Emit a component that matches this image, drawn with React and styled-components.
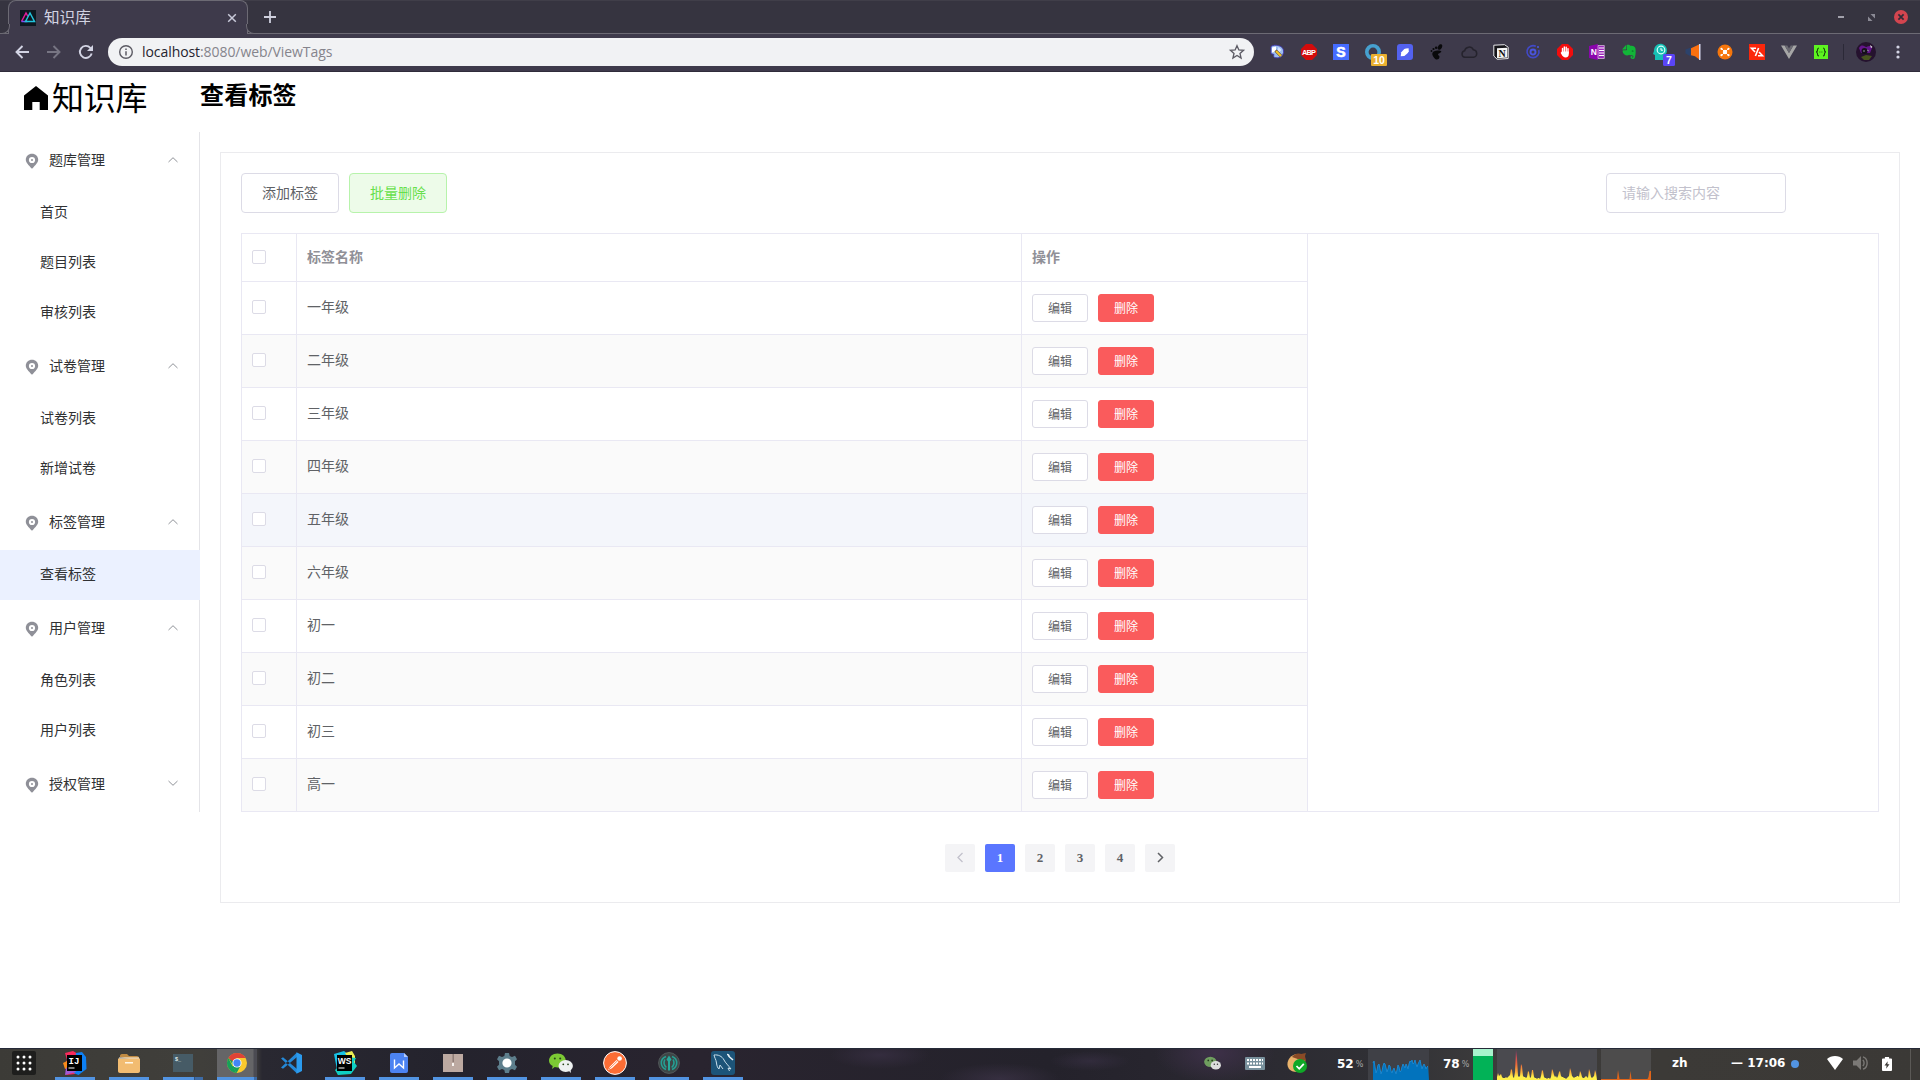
import React from "react";
import styled, { createGlobalStyle } from "styled-components";

const cjk = '"Noto Sans CJK SC"';

const GlobalStyle = createGlobalStyle`
  * { box-sizing: border-box; }
  html, body { margin: 0; padding: 0; background: #fff; }
  body { width: 1920px; height: 1080px; overflow: hidden; font-family: "Liberation Serif", ${cjk}, serif; }
  svg { display: block; flex: none; overflow: visible; }
`;

const Screen = styled.div`
  width: 1920px;
  height: 1080px;
  display: flex;
  flex-direction: column;
  overflow: hidden;
`;

/* ---------- browser chrome ---------- */
const TabStrip = styled.div`
  height: 34px;
  flex: none;
  background: #363440;
  border-top: 1px solid #403e49;
  border-bottom: 1px solid #6c6a74;
  display: flex;
  align-items: stretch;
  padding-left: 8px;
`;

const Tab = styled.div`
  position: relative;
  width: 240px;
  margin: -1px 0 -1px;
  background: #3e3a4b;
  border: 1px solid #6c6a74;
  border-bottom: 0;
  border-radius: 8px 8px 0 0;
  display: flex;
  align-items: center;
  padding: 0 10px 0 11px;
  font-family: "Noto Sans", ${cjk}, sans-serif;
  font-size: 15.6px;
  color: #d2d3e2;
  &::before, &::after {
    content: "";
    position: absolute;
    bottom: 0;
    width: 9px;
    height: 9px;
    border-bottom: 1px solid #6c6a74;
    background: #363440;
  }
  &::before { left: -9px; border-right: 1px solid #6c6a74; border-bottom-right-radius: 8px; }
  &::after { right: -9px; border-left: 1px solid #6c6a74; border-bottom-left-radius: 8px; }
`;

const TabTitle = styled.span`
  margin-left: 8px;
  flex: 1;
  line-height: 20px;
  padding-bottom: 2px;
`;

const NewTab = styled.div`
  width: 44px;
  display: flex;
  align-items: center;
  justify-content: center;
`;

const WindowControls = styled.div`
  margin-left: auto;
  display: flex;
  align-items: center;
  padding-right: 4px;
`;

const Slot = styled.div`
  width: ${(p) => p.$w || 32}px;
  display: flex;
  align-items: center;
  justify-content: center;
  flex: none;
`;

const Toolbar = styled.div`
  height: 38px;
  flex: none;
  background: #3e3a4b;
  border-bottom: 1px solid #2f2c3a;
  display: flex;
  align-items: center;
  padding: 0 6px 1px;
`;

const AddressBar = styled.div`
  width: 1147px;
  height: 28px;
  margin-left: 6px;
  margin-right: 6px;
  border-radius: 14px;
  background: #f1f2f4;
  display: flex;
  align-items: center;
  padding: 0 9px 0 11px;
`;

const Url = styled.div`
  flex: 1;
  margin-left: 9px;
  font-family: "Open Sans", "Noto Sans", sans-serif;
  font-size: 14px;
  line-height: 20px;
  letter-spacing: -0.07px;
  padding-bottom: 1px;
  color: #85848c;
  span { color: #25232e; }
`;

const Extensions = styled.div`
  display: flex;
  padding-left: 1px;
`;

const Divider = styled.div`
  width: 1px;
  height: 16px;
  background: #2b2937;
  margin: 0 6px;
`;

/* ---------- page ---------- */
const Page = styled.div`
  height: 976px;
  flex: none;
  background: #fff;
`;

const Header = styled.header`
  height: 60px;
  display: flex;
`;

const Logo = styled.div`
  width: 200px;
  padding-left: 23px;
  display: flex;
  align-items: center;
  gap: 3px;
  height: 52px;
  font-family: ${cjk}, sans-serif;
  font-size: 32px;
  font-weight: 400;
  color: #000;
  span { line-height: 52px; letter-spacing: -0.3px; padding-bottom: 4px; }
`;

const PageTitle = styled.h2`
  margin: 0;
  font-family: ${cjk}, sans-serif;
  font-size: 24px;
  font-weight: 700;
  letter-spacing: 0.2px;
  line-height: 44px;
  color: #000;
`;

const Body = styled.div`
  display: flex;
  align-items: flex-start;
`;

const Sidebar = styled.nav`
  width: 200px;
  height: 680px;
  border-right: 1px solid #e4e4e8;
  font-family: ${cjk}, sans-serif;
  font-size: 14px;
  color: #303133;
`;

const Group = styled.div`
  height: 56px;
  display: flex;
  align-items: center;
  padding: 0 20px 0 25px;
  span { flex: 1; margin-left: 10px; line-height: 20px; padding-bottom: 2px; }
  svg:first-child { margin-top: 2px; }
`;

const Item = styled.div`
  width: 200px;
  height: 50px;
  line-height: 47px;
  padding-left: 40px;
  background: ${(p) => (p.$active ? "#ebf1ff" : "transparent")};
`;

const Card = styled.main`
  width: 1680px;
  height: 751px;
  margin: 20px 0 0 20px;
  padding: 20px;
  border: 1px solid #ebebee;
  color: #606266;
`;

const Actions = styled.div`
  display: flex;
  gap: 10px;
  margin-bottom: 20px;
`;

const Button = styled.button`
  width: 98px;
  height: 40px;
  padding: 0 0 3px;
  border-radius: 4px;
  border: 1px solid ${(p) => (p.$success ? "#b7f3ab" : "#dcdbe6")};
  background: ${(p) => (p.$success ? "#edfbe9" : "#fff")};
  color: ${(p) => (p.$success ? "#67e04c" : "#606266")};
  font: 14px/20px ${cjk}, sans-serif;
`;

const Search = styled.input`
  width: 180px;
  height: 40px;
  margin-left: auto;
  margin-right: 93px;
  padding: 0 15px 3px;
  border-radius: 4px;
  border: 1px solid #dcdbe6;
  background: #fff;
  font: 14px/20px ${cjk}, sans-serif;
  &::placeholder { color: #c2c1cc; opacity: 1; }
`;

const line = "#e9e8f3";

const Table = styled.div`
  height: 579px;
  border: 1px solid ${line};
`;

const Row = styled.div`
  width: 1066px;
  height: ${(p) => (p.$head ? 48 : 53)}px;
  display: grid;
  grid-template-columns: 55px 725px 286px;
  border-bottom: 1px solid ${line};
  background: ${(p) => (p.$hover ? "#f4f6fb" : p.$striped ? "#fafafa" : "#fff")};
  font-family: ${cjk}, sans-serif;
  font-size: 14px;
  font-weight: ${(p) => (p.$head ? 700 : 400)};
  color: ${(p) => (p.$head ? "#909097" : "#606266")};
  &:last-child { border-bottom: 0; height: 52px; }
`;

const Cell = styled.div`
  border-right: 1px solid ${line};
  padding: 0 10px ${(p) => p.$lift || 0}px;
  display: flex;
  align-items: center;
  gap: 10px;
`;

const Checkbox = styled.span`
  width: 14px;
  height: 14px;
  border: 1px solid #dcdbe6;
  border-radius: 2px;
  background: #fff;
`;

const MiniButton = styled.button`
  width: 56px;
  height: 28px;
  padding: 0 0 1px;
  border-radius: 3px;
  border: 1px solid ${(p) => (p.$danger ? "#fa5b5c" : "#dcdbe6")};
  background: ${(p) => (p.$danger ? "#fa5b5c" : "#fff")};
  color: ${(p) => (p.$danger ? "#fff" : "#606266")};
  font: 12px/16px ${cjk}, sans-serif;
`;

const Pagination = styled.div`
  display: flex;
  justify-content: center;
  gap: 10px;
  margin-top: 32px;
`;

const PageNumber = styled.button`
  width: 30px;
  height: 28px;
  padding: 0;
  border: 0;
  border-radius: 2px;
  display: flex;
  align-items: center;
  justify-content: center;
  background: ${(p) => (p.$active ? "#5a76ff" : "#f4f4f6")};
  color: ${(p) => (p.$active ? "#fff" : "#606266")};
  font: 700 13px/28px "Liberation Serif", serif;
`;

/* ---------- desktop panel ---------- */
const Taskbar = styled.footer`
  height: 32px;
  flex: none;
  display: flex;
  border-top: 1px solid #252a38;
  background:
    radial-gradient(ellipse 60px 30px at 1215px 4px, #3d3048, transparent),
    radial-gradient(ellipse 60px 16px at 1000px 30px, #40364ca0, transparent),
    radial-gradient(ellipse 50px 14px at 880px 6px, #3a3146b0, transparent),
    radial-gradient(ellipse 40px 10px at 1090px 12px, #3b324890, transparent),
    linear-gradient(90deg, #3c3b37 0, #403f3b 200px, #3d3c3c 256px, #292831 262px, #24232d 450px, #29242f 700px, #24222b 1050px, #28262f 1180px, #303035 1380px, #3d3c3c 1500px, #3c3a37 1660px, #3b3936 1920px);
  color: #fff;
  font-family: "DejaVu Sans", sans-serif;
  font-weight: 700;
  font-size: 12px;
`;

const AppSlot = styled.div`
  width: ${(p) => p.$w || 54}px;
  flex: none;
  display: flex;
  flex-direction: column;
  align-items: center;
`;

const AppFace = styled.div`
  width: 40px;
  height: 28px;
  padding-bottom: 1px;
  display: flex;
  align-items: center;
  justify-content: center;
  background: ${(p) => (p.$active ? "linear-gradient(90deg, #656567 0 36px, #4b4b52 37px)" : "none")};
`;

const Underline = styled.div`
  width: 40px;
  height: 3px;
  background: ${(p) =>
    p.$kind === "none" ? "none" :
    p.$kind === "stacked" ? "linear-gradient(90deg, #5294e2 0 31px, #35527a 31px 32px, #3d6ba5 32px)" :
    p.$kind === "active" ? "linear-gradient(90deg, #5294e2 0 37px, #3d6ba5 37px)" : "#5294e2"};
`;

const Tray = styled.div`
  margin-left: auto;
  width: 729px;
  display: flex;
  align-items: center;
`;

const Percent = styled.div`
  width: ${(p) => p.$w}px;
  display: flex;
  align-items: center;
  line-height: 29px;
  padding-bottom: 1px;
  gap: 2px;
  small { font-size: 8px; font-weight: 400; color: #a8a8a8; }
`;

const Memory = styled.div`
  width: 20px;
  height: 31px;
  background: linear-gradient(#a9f4cd 0 7px, #02b257 7px);
  margin-right: 4px;
`;

const Graph = styled.div`
  width: ${(p) => p.$w}px;
  height: 31px;
  margin-right: ${(p) => p.$gap || 0}px;
  background: ${(p) => p.$tone || "#4a4a4f"};
`;

const Label = styled.div`
  width: ${(p) => p.$w}px;
  line-height: 29px;
  padding-bottom: 2px;
  white-space: nowrap;
`;

const Dot = styled.div`
  width: 8px;
  height: 8px;
  border-radius: 50%;
  background: #5294e2;
  margin: 0 28px 2px 0;
`;

const Battery = styled.div`
  margin-left: 3px;
  margin-bottom: 2px;
`;

const PanelEdge = styled.div`
  width: 1px;
  height: 31px;
  background: #5b5956;
  margin-left: 18px;
`;

/* ---------- icons ---------- */
const Svg = ({ s = 16, w, h, vb, children, ...rest }) => (
  <svg width={w || s} height={h || s} viewBox={vb || `0 0 ${w || s} ${h || s}`} fill="none" {...rest}>{children}</svg>
);
const T = ({ children, ...p }) => (
  <text textAnchor="middle" fontFamily="Liberation Sans, sans-serif" fontWeight="700" {...p}>{children}</text>
);

const extensions = [
  <Svg s={16}><path d="M2 2.500C4 1 7 1 8.500 1.500c4 .5 6.500 3 6 7-1 5-5 6-9 5C4 12 5 11 5 10.500L2 9.500z" fill="#9dbdf0" stroke="#4038b0" strokeWidth=".9" /><path d="M3 3.500l4-1v5l-4 1z" fill="#fff" /><path d="M9.500 3l3 3-2 2-2-1z" fill="#d5e3ff" /><path d="M6.500 6.500l5.500 5.500" stroke="#4b3a2a" strokeWidth="3" /><path d="M7 7l5 5" stroke="#f3c32c" strokeWidth="2.200" /></Svg>,
  <Svg s={16}><path d="M5 0h6l5 5v6l-5 5H5l-5-5V5z" fill="#d30b0b" /><T x="8" y="10.800" fontSize="7.400" fill="#fff" textLength="14">ABP</T></Svg>,
  <Svg s={16}><path fill="#456cff" d="M0 0h16v16H0z" /><T x="8" y="13" fontSize="14" fill="#fff" stroke="#fff" strokeWidth=".6">S</T></Svg>,
  <Svg w={24} h={24}><circle cx="12" cy="12" r="6.200" stroke="#46a0cf" strokeWidth="3.600" /><rect x="10" y="14" width="16" height="12" rx="1" fill="#eab02f" /><T x="18" y="23.800" fontSize="10.500" fill="#fff">10</T></Svg>,
  <Svg s={16}><path d="M3 0h10a3 3 0 013 3v10a3 3 0 01-3 3H0V3a3 3 0 013-3z" fill="#5362f0" /><path d="M3.700 12.200l.6-4 3-3.200L9 4.600l2.600-.3.200 3-1 1.600-3.400 3z" fill="#fff" /></Svg>,
  <Svg s={16}><path d="M3.300 9.500c.5-3 5.500-3.500 8.500-2.500 2.200 1.500-2.800 2-2.800 3.500 0 1.200 1.700.6 1.500 2.500-.5 3.200-3.700 3-5 1.300-1-1.200-2.500-3-2.200-4.800z" fill="#09090b" /><ellipse cx="11" cy="3" rx="2" ry="2.900" transform="rotate(25 11 3)" fill="#09090b" /><circle cx="7.200" cy="3.800" r="1.300" fill="#09090b" /><circle cx="4.500" cy="5" r="1.100" fill="#09090b" /><circle cx="2.500" cy="7" r=".9" fill="#09090b" /></Svg>,
  <Svg s={16}><path d="M4 13.300a3.300 3.300 0 01-.4-6.500A4.600 4.600 0 0112.300 5.800a3.800 3.800 0 01.4 7.500z" stroke="#25232d" strokeWidth="1.500" /></Svg>,
  <Svg s={16}><path d="M.8 1.200L11.500.7l3.700 2.500v11.300l-11 .8L.8 12z" fill="#16151a" stroke="#e7e7ea" /><path d="M4 4.300l10.300-.6v9.900L4 14.200z" fill="#f6f6f6" /><T x="9.200" y="12.600" fontSize="10" fill="#111" fontFamily="Liberation Serif">N</T></Svg>,
  <Svg s={16}><path d="M10.800 2.300A6 6 0 1013.800 6" stroke="#4149c8" strokeWidth="1.600" /><circle cx="8" cy="8" r="2.500" stroke="#4a55de" strokeWidth="1.900" /><circle cx="13" cy="3" r="1.100" fill="#4a55de" /></Svg>,
  <Svg s={16}><path d="M5 0h6l5 5v6l-5 5H5l-5-5V5z" fill="#f20d0d" /><path d="M5.500 9V4.400M7.300 8V2.900M9.200 8V3.100M11 9V4.600" stroke="#fff" strokeWidth="1.400" strokeLinecap="round" /><path d="M4.800 7.500h7V10c0 2-1 3.500-3.200 3.500-2 0-3.100-1.400-4-3l-1-1.800 1-.6z" fill="#fff" /></Svg>,
  <Svg s={16}><path d="M0 2l9-2v16l-9-2z" fill="#8a06ac" /><path d="M9 1.500h6.300v13H9z" fill="#9b29b9" stroke="#e3c5ea" strokeWidth=".7" /><path d="M10 4h5M10 6.500h5M10 9h5M10 11.500h5" stroke="#fff" /><T x="4.700" y="11" fontSize="8.500" fill="#fff">N</T></Svg>,
  <Svg s={16}><path d="M5 1l-4 4.500h3.400c.7 0 1-.3 1-1V1zM6 .8c1.800-.4 3 .3 3.300 1 4 .2 5 1 5.300 3.700.3 4-.2 6-.8 8.200-.5 1.800-4.200 1.500-4.300-.4-.1-1.700 2.200-1.800 2.300-.6-1.200-.1-1 .8 0 .8.800 0 .9-1.500-.3-2-1.500-.5-2.500.3-3.200-.7C6 12.500 2 11 1.500 7c0-.4.3-.8.800-.8H5c.7 0 1-.4 1-1z" fill="#12b538" /><ellipse cx="11.600" cy="7" rx="1" ry=".6" fill="#0b5a26" /></Svg>,
  <Svg w={24} h={24}><path d="M6 20v-5l-2-1 1-3c0-5 4-8 8-7s6 5 4.500 9L15 16v4z" fill="#16bfb4" /><circle cx="12" cy="10" r="3.800" stroke="#d8fffb" strokeWidth="1.200" /><path d="M12 8v2.200h2" stroke="#fff" /><rect x="14" y="14" width="12" height="12" rx="1.500" fill="#5a45f6" /><T x="20" y="23.800" fontSize="10.500" fill="#fff">7</T></Svg>,
  <Svg s={16}><path d="M.5 5.500l5.500-2v9l-5.500-3z" fill="#2c426b" /><path d="M6 4.300L14 .5v14.700l-4-3-4-1z" fill="#fb7010" /><path d="M14 0h1.500v16H14z" fill="#d7d8ef" /></Svg>,
  <Svg s={16}><circle cx="8" cy="8" r="7.500" fill="#f6760c" /><path d="M4.500 4.500l7 7M11.500 4.500l-7 7" stroke="#fff" strokeWidth=".9" /><circle cx="8" cy="8" r="2.200" fill="#fff" /><g fill="#fff"><circle cx="4.500" cy="4.800" r="1.100" /><circle cx="11.500" cy="4.800" r="1.100" /><circle cx="4.500" cy="11.200" r="1.100" /><circle cx="11.500" cy="11.200" r="1.100" /></g></Svg>,
  <Svg s={16}><path fill="#fb270b" d="M0 0h16v16H0z" /><path d="M7 4.300H2.500L6 8M9 11.700h4.500L10 8M9.600 4L6.400 12" stroke="#fff" strokeWidth="1.600" /></Svg>,
  <Svg s={16}><path d="M0 1.500h3.600L8 9l4.400-7.500H16L8 15z" fill="#a6a6a6" /><path d="M3.600 1.500h2.700L8 4.400l1.700-2.900h2.700L8 9z" fill="#6b6a72" /></Svg>,
  <Svg s={16}><path fill="#5df420" d="M1 1h14v14H1z" /><path d="M6 4c-1.500 0-1.500.5-1.500 2S4 8 3 8c1 0 1.500.5 1.500 2s0 2 1.500 2M10 4c1.500 0 1.500.5 1.500 2s.5 2 1.500 2c-1 0-1.500.5-1.500 2s0 2-1.500 2M6.500 8h.8M8.500 8h.8" stroke="#153d0c" strokeWidth="1.100" /></Svg>,
];

const Pin = () => (
  <Svg w={14} h={16}><path d="M7 .8c3.500 0 6.200 2.600 6.200 6 0 2.700-2.500 5.200-6.200 9-3.700-3.800-6.200-6.300-6.200-9 0-3.400 2.700-6 6.200-6z" fill="#8f9098" /><circle cx="7" cy="7" r="3.100" fill="#fff" /><circle cx="7" cy="7" r="1" fill="#8f9098" /></Svg>
);
const Arrow = ({ up }) => (
  <Svg w={12} h={8}><path d={up ? "M1.500 6L6 1.700 10.500 6" : "M1.500 1L6 5.300 10.500 1"} stroke="#909399" strokeWidth="1" /></Svg>
);
const Hex = ({ children }) => <Svg s={24}>{children}</Svg>;

const apps = [
  { u: "on", i: <Hex><path d="M2 2l8-2 5 3-3 20-9 1 3-7-5-3 3-5z" fill="#f9295c" /><path d="M0 12l6-3v8l-4 1z" fill="#f98b1b" /><path d="M13 2l6-1 4 5 .5 12-8 6-5-2z" fill="#0d80f4" /><path d="M3 17l6-3 4 7-11 3z" fill="#a05bd6" /><path fill="#000" d="M4 4h15v16H4z" /><T x="11" y="12.600" fontSize="9" fill="#fff" fontFamily="Liberation Mono">IJ</T><path fill="#fff" d="M5.500 16.500h6v1h-6z" /></Hex> },
  { u: "on", i: <Svg w={22} h={18}><path d="M2 3V2c0-1 .5-2 2-2h5l2 2h8c1 0 2 .8 2 2v3z" fill="#c08b43" /><path d="M0 4.500h22V17c0 1.200-.8 2-2 2H2c-1.200 0-2-.8-2-2z" fill="#f2bc71" /><path d="M1 3.500h20v1H1zM7 8h8v1.400H7z" fill="#fff7e8" /></Svg> },
  { u: "stacked", i: <Svg w={20} h={20}><path fill="#465b66" d="M0 1h20v18H0z" /><T x="5" y="8" fontSize="5.500" fill="#dfe7ea">$_</T></Svg> },
  { u: "active", i: <Svg s={20} vb="0 0 48 48"><circle cx="24" cy="24" r="24" fill="#fbc92d" /><path d="M3.200 12L15 35l8 13A24 24 0 013.200 12z" fill="#16a05a" /><path d="M3.200 12l11 17 9.800-5z" fill="#16a05a" /><path d="M23 48l10-18-10 4-8-4-3 2z" fill="#16a05a" /><path d="M3.200 12A24 24 0 0144.800 12H24L14 20z" fill="#e04336" /><circle cx="24" cy="24" r="11" fill="#fff" /><circle cx="24" cy="24" r="8.800" fill="#4285f4" /></Svg> },
  { u: "none", i: <Svg s={22}><path d="M1 6.500l2-1.200L17 17v4.500zM1 15.500l2 1.200L17 5V.5z" fill="#2489d8" /><path d="M16.500.3L22 3v16l-5.500 2.700z" fill="#2b9bee" /></Svg> },
  { u: "on", i: <Hex><path d="M1 3l10-3 5 4-2 16-9 4z" fill="#17c3e6" /><path d="M12 2l7-2 3 5v9l-4-2z" fill="#ecef53" /><path d="M15 6l8 1-2 4 3 4-6 8-13 1-3-5z" fill="#0fcfc4" /><path fill="#000" d="M4 4h15v16H4z" /><T x="11.500" y="12.500" fontSize="8.500" fill="#fff">WS</T><path fill="#fff" d="M5.500 16.500h6v1h-6z" /></Hex> },
  { u: "on", i: <Svg w={18} h={20}><path d="M2 0h12l4 4v14a2 2 0 01-2 2H2a2 2 0 01-2-2V2a2 2 0 012-2z" fill="#4c83f2" /><path d="M14 0l4 4h-4z" fill="#b5ccfb" /><path d="M4.500 6.500V15L9 11l4.500 4V7.500" stroke="#fff" strokeWidth="1.400" /></Svg> },
  { u: "on", i: <Svg w={20} h={20}><path fill="#bca9a1" d="M0 1h20v18H0z" /><path d="M9.500 1h1.400v8H9.500z" fill="#8c7a74" /><path d="M9 10h2v3H9z" fill="#f7f2ef" /></Svg> },
  { u: "on", i: <Svg s={22}><path d="M9 1h4l.7 3 2.300 1 3-1.300 2 3.500-2 2v3.600l2 2-2 3.500-3-1.300-2.300 1L13 21H9l-.7-3L6 17l-3 1.300-2-3.500 2-2V9.200l-2-2L3 3.700 6 5l2.300-1z" fill="#5d7e8c" /><circle cx="11" cy="11" r="4.600" fill="#fff" /></Svg> },
  { u: "on", i: <Svg w={24} h={20}><path d="M8.500.5c5 0 8.300 3.200 8.300 7.200S13.500 14.500 8.500 14.500c-1 0-2-.1-2.800-.4L3 16l.7-3C1.300 11.700 0 9.900 0 7.700 0 3.700 3.500.5 8.500.5z" fill="#7cc934" /><ellipse cx="16.700" cy="12.900" rx="7.200" ry="6" fill="#eef1f1" /><path d="M19 17l3 3-.5-3.500z" fill="#eef1f1" /><g fill="#28451a"><circle cx="5.800" cy="5.500" r="1" /><circle cx="11.200" cy="5.500" r="1" /><circle cx="14.300" cy="11.300" r=".9" /><circle cx="19" cy="11.300" r=".9" /></g></Svg> },
  { u: "on", i: <Hex><circle cx="12" cy="12" r="11.400" fill="#fc6d35" stroke="#fff" /><path d="M5 19l2-3.500L13.500 9l2 2L9 17.300z" fill="#fff" /><path d="M6 18L14.500 9.800" stroke="#fc6d35" strokeWidth=".8" /><circle cx="16.600" cy="7.500" r="2.300" fill="#fff" /></Hex> },
  { u: "on", i: <Svg s={22}><circle cx="11" cy="11" r="10.400" fill="#3d4647" stroke="#52595b" /><path d="M8 4.500C1.500 7 2 15 8 17.500M14 4.500c6.500 2.500 6 10.500 0 13M6.800 7.500c-1.300 3-.8 6 1.500 8M15.200 7.500c1.300 3 .8 6-1.500 8" stroke="#249f93" strokeWidth="1.600" /><path d="M11 3.500l2.500 4-1.500 2v9h-2v-9l-1.500-2z" fill="#27a99c" /></Svg> },
  { u: "on", i: <Hex><rect width="24" height="24" rx="3" fill="#1c5479" /><path d="M3 4c4-.5 8 1 10 5 1.500 3 4 5 7 9l-3-1 1.500 3M3 4c.5 3 2 4 2.500 8 .3 3 1.200 5 2.500 6l1-4 3 4" stroke="#c9dfeb" strokeWidth="1" /><path d="M16 3.500c1.500 0 2 .6 2 2l4 3.500" stroke="#e9f2f7" strokeWidth="1.600" /></Hex> },
];

const cpu = [16, 18, 12, 6, 9, 14, 15, 10, 5, 8, 13, 16, 15, 11, 7, 10, 14, 13, 8, 6, 9, 11, 8, 5, 9, 14, 12, 7, 8, 12, 15, 13, 11, 15, 13, 10, 15, 18, 17, 19, 15, 16, 19, 15, 12, 15, 17, 19, 14, 10, 13, 15, 13, 10, 12, 13];
const cpuPoints = cpu.map((v, i) => `${i + 5},${30 - v}`).join(" ");
const disk = [3, 7, 4, 5, 6, 3, 2, 2, 2, 3, 2, 3, 4, 5, 11, 10, 3, 2, 8, 30, 22, 4, 3, 4, 16, 14, 4, 3, 3, 2, 3, 9, 8, 2, 3, 10, 10, 3, 2, 2, 1, 2, 2, 1, 4, 10, 9, 3, 2, 2, 1, 2, 2, 1, 3, 11, 9, 5, 3, 4, 2, 4, 8, 9, 4, 3, 3, 2, 2, 1, 2, 3, 4, 12, 9, 4, 3, 2, 3, 3, 4, 4, 3, 9, 7, 3, 2, 2, 3, 4, 3, 2, 11, 8, 3, 2, 3, 4, 10, 7];

const menu = [
  { title: "题库管理", items: ["首页", "题目列表", "审核列表"] },
  { title: "试卷管理", items: ["试卷列表", "新增试卷"] },
  { title: "标签管理", items: ["查看标签"] },
  { title: "用户管理", items: ["角色列表", "用户列表"] },
  { title: "授权管理", items: [] },
];
const tags = ["一年级", "二年级", "三年级", "四年级", "五年级", "六年级", "初一", "初二", "初三", "高一"];

export default function App() {
  return (
    <Screen>
      <GlobalStyle />
      <TabStrip>
        <Tab>
          <Svg s={16}><path fill="#0d1820" d="M0 0h16v16H0z" /><path d="M1.500 11.500L6 3l2 3.500" stroke="#e31b9b" strokeWidth="1.500" /><path d="M1.500 11.500h6" stroke="#7a4ff0" strokeWidth="1.500" /><path d="M5.500 11.500L10 3l4.500 8.500z" stroke="#22c4dd" strokeWidth="1.500" /></Svg>
          <TabTitle>知识库</TabTitle>
          <Svg s={10}><path d="M1.200 1.200l7.600 7.600M8.800 1.200L1.200 8.800" stroke="#c9cada" strokeWidth="1.500" /></Svg>
        </Tab>
        <NewTab><Svg s={12}><path d="M6 0v12M0 6h12" stroke="#cfd0de" strokeWidth="1.800" /></Svg></NewTab>
        <WindowControls>
          <Slot $w={30}><Svg w={6} h={2}><path fill="#a2a1ab" d="M0 0h6v2H0z" /></Svg></Slot>
          <Slot $w={30}><Svg s={7}><path d="M2.500 0H7v4.500zM0 2.500V7h4.500z" fill="#8b8a95" /></Svg></Slot>
          <Slot $w={30}><Svg s={14}><circle cx="7" cy="7" r="7" fill="#d3454f" /><path d="M4.400 4.400l5.200 5.200M9.600 4.400L4.400 9.600" stroke="#302c38" strokeWidth="1.700" /></Svg></Slot>
        </WindowControls>
      </TabStrip>
      <Toolbar>
        <Slot><Svg s={14}><path d="M14 7H1.800M7.500 1L1.500 7l6 6" stroke="#d3d4e4" strokeWidth="1.900" /></Svg></Slot>
        <Slot><Svg s={14}><path d="M0 7h12.200M6.500 1l6 6-6 6" stroke="#777583" strokeWidth="1.900" /></Svg></Slot>
        <Slot><Svg s={14}><path d="M12.700 8.500A6 6 0 1111.300 2.800L12.500 4" stroke="#d3d4e4" strokeWidth="1.900" /><path d="M14 0v6H8z" fill="#d3d4e4" /></Svg></Slot>
        <AddressBar>
          <Svg s={14}><circle cx="7" cy="7" r="6.300" stroke="#5c5b64" strokeWidth="1.400" /><path d="M7 6.200v4.300M7 3.500V5" stroke="#5c5b64" strokeWidth="1.500" /></Svg>
          <Url><span>localhost</span>:8080/web/ViewTags</Url>
          <Svg s={16} vb="0 0 24 24"><path d="M12 2.500l2.800 6.400 7 .6-5.300 4.600 1.600 6.900-6.100-3.700L5.900 21l1.600-6.900L2.200 9.500l7-.6z" stroke="#5c5b64" strokeWidth="2" /></Svg>
        </AddressBar>
        <Extensions>{extensions.map((icon, i) => <Slot key={i}>{icon}</Slot>)}</Extensions>
        <Divider />
        <Slot>
          <Svg s={20}><circle cx="10" cy="10" r="10" fill="#25122e" /><path d="M3 6c3-5 6-1 7-1s4-3 6 1l-2 5H5z" fill="#64158b" /><path d="M5 15l5-2 6 1-3 4H8z" fill="#47541f" /><circle cx="8.500" cy="9" r="3" fill="#141018" /><path d="M14 3l2.500 2-1.500 1z" fill="#eee" /><path d="M7 9h2M11 8l2 1" stroke="#8d929b" /></Svg>
        </Slot>
        <Slot><Svg w={4} h={14}><circle cx="2" cy="2" r="1.600" fill="#d3d4e4" /><circle cx="2" cy="7" r="1.600" fill="#d3d4e4" /><circle cx="2" cy="12" r="1.600" fill="#d3d4e4" /></Svg></Slot>
      </Toolbar>

      <Page>
        <Header>
          <Logo>
            <Svg w={26} h={26}><path d="M13 1L1 10.500V25h8.300v-8h7.400v8H25V10.500z" fill="#000" /></Svg>
            <span>知识库</span>
          </Logo>
          <PageTitle>查看标签</PageTitle>
        </Header>
        <Body>
          <Sidebar>
            {menu.map((g) => (
              <React.Fragment key={g.title}>
                <Group><Pin /><span>{g.title}</span><Arrow up={g.items.length > 0} /></Group>
                {g.items.map((t) => <Item key={t} $active={t === "查看标签"}>{t}</Item>)}
              </React.Fragment>
            ))}
          </Sidebar>
          <Card>
            <Actions>
              <Button>添加标签</Button>
              <Button $success>批量删除</Button>
              <Search placeholder="请输入搜索内容" />
            </Actions>
            <Table>
              <Row $head>
                <Cell $lift={2}><Checkbox /></Cell>
                <Cell $lift={4}>标签名称</Cell>
                <Cell $lift={4}>操作</Cell>
              </Row>
              {tags.map((t, i) => (
                <Row key={t} $striped={i % 2 === 1} $hover={t === "五年级"}>
                  <Cell $lift={2}><Checkbox /></Cell>
                  <Cell $lift={5}>{t}</Cell>
                  <Cell><MiniButton>编辑</MiniButton><MiniButton $danger>删除</MiniButton></Cell>
                </Row>
              ))}
            </Table>
            <Pagination>
              <PageNumber><Svg w={8} h={12}><path d="M6.500 1L2 5.500 6.500 10" stroke="#c2c1cc" strokeWidth="1.300" /></Svg></PageNumber>
              {[1, 2, 3, 4].map((n) => <PageNumber key={n} $active={n === 1}>{n}</PageNumber>)}
              <PageNumber><Svg w={8} h={12}><path d="M2 1l4.500 4.500L2 10" stroke="#606266" strokeWidth="1.500" /></Svg></PageNumber>
            </Pagination>
          </Card>
        </Body>
      </Page>

      <Taskbar>
        <AppSlot $w={48}>
          <AppFace>
            <Hex><rect width="24" height="24" rx="2" fill="#1e1e1d" />{[6, 12, 18].map((y) => [6, 12, 18].map((x) => <circle key={x + "-" + y} cx={x} cy={y} r="1.500" fill="#fff" />))}</Hex>
          </AppFace>
        </AppSlot>
        {apps.map((a, i) => (
          <AppSlot key={i}>
            <AppFace $active={a.u === "active"}>{a.i}</AppFace>
            <Underline $kind={a.u} />
          </AppSlot>
        ))}
        <Tray>
          <Slot $w={42}><Svg w={17} h={18} vb="0 0 24 25"><ellipse cx="9" cy="8" rx="8.800" ry="7.300" fill="#6f9e5f" /><ellipse cx="16.700" cy="13" rx="7.200" ry="6" fill="#dcdedd" /><circle cx="6" cy="6" r="1.200" fill="#243a1d" /><circle cx="11.500" cy="6" r="1.200" fill="#243a1d" /><circle cx="14.500" cy="11.500" r="1" fill="#333" /><circle cx="19" cy="11.500" r="1" fill="#333" /></Svg></Slot>
          <Slot $w={43}><Svg w={20} h={15}><rect width="20" height="13" rx="1" fill="#78909c" /><path d="M2 3h16M2 6.500h16" stroke="#fff" strokeWidth="2" strokeDasharray="2 1" /><path d="M4 10h12" stroke="#fff" strokeWidth="2" /></Svg></Slot>
          <Slot $w={42}><Svg w={22} h={25}><path d="M3 17C-1 11 3 4 10 2l9 4c1 6-1 12-8 14-4 0-6-1-8-3z" fill="#eab36c" /><path d="M6 5c4-5 8-3 9-3l5-1-1 3 1 5c-5-1-9-2-14-4z" fill="#8a4b26" /><circle cx="14" cy="14" r="7" fill="#0fa827" /><path d="M10.500 14l2.700 2.800 4.600-5" stroke="#fff" strokeWidth="1.800" /></Svg></Slot>
          <Slot $w={19} />
          <Percent $w={31}>52<small>%</small></Percent>
          <Graph $w={61} $gap={14} $tone="#3f4046"><Svg w={61} h={31}><polygon points={`5,31 ${cpuPoints} 61,31`} fill="#0273bd" /><polyline points={cpuPoints} stroke="#1a86cf" /></Svg></Graph>
          <Percent $w={30}>78<small>%</small></Percent>
          <Memory />
          <Graph $w={100} $gap={4}>
            <Svg w={100} h={31}>
              <defs><linearGradient id="flame" x1="0" y1="31" x2="0" y2="0" gradientUnits="userSpaceOnUse"><stop offset=".1" stopColor="#fff04a" /><stop offset=".25" stopColor="#fbb13a" /><stop offset=".5" stopColor="#ef6a3a" /><stop offset="1" stopColor="#a02a72" /></linearGradient></defs>
              <polygon points={`0,31 ${disk.map((v, i) => `${i},${31 - v}`).join(" ")} 100,31`} fill="url(#flame)" />
            </Svg>
          </Graph>
          <Graph $w={50} $gap={21} $tone="#4d4c4c"><Svg w={50} h={31}><path d="M0 31v-1h16l1-9 1.500 9h10l1-8 1 8h16l1-2 1-6 1.500 0v9z" fill="#e0651a" /></Svg></Graph>
          <Label $w={59}>zh</Label>
          <Label $w={60}>— 17:06</Label>
          <Dot />
          <Svg w={16} h={17}><path d="M8 14L0 3c4-4 12-4 16 0z" fill="#fff" /></Svg>
          <Slot $w={36}><Svg w={16} h={17}><path d="M0 4.500h3.500L8 0v14L3.500 9.500H0z" fill="#7b7976" /><path d="M9.800 4c1.700 1.500 1.700 4.500 0 6M10 .8c5.500 1.700 5.500 10.700 0 12.400" stroke="#7b7976" strokeWidth="1.400" /></Svg></Slot>
          <Battery><Svg w={10} h={14} vb="0 0 12 15" preserveAspectRatio="none"><path d="M1 1.500h2.500V0h5v1.500H11c.6 0 1 .4 1 1V14c0 .6-.4 1-1 1H1c-.6 0-1-.4-1-1V2.500c0-.6.4-1 1-1z" fill="#fff" /><path d="M6.800 4.500L3 9.200h2.500L5 12.500l4-4.700H6.500z" fill="#3b3936" /></Svg></Battery>
          <PanelEdge />
        </Tray>
      </Taskbar>
    </Screen>
  );
}
